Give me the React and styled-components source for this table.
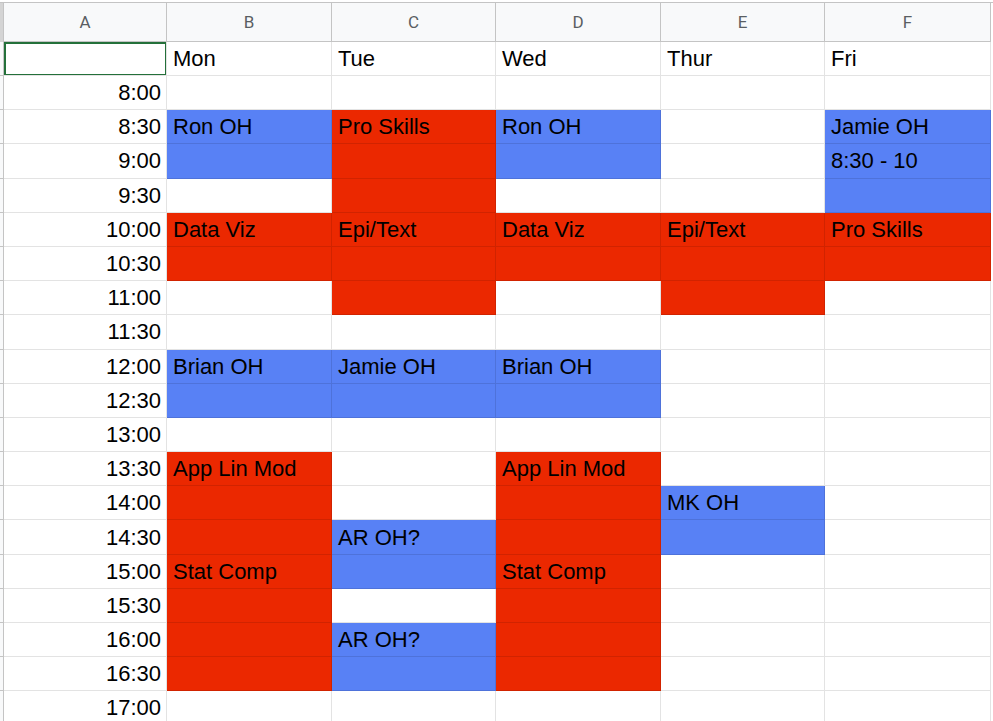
import React from 'react';
import styled, { createGlobalStyle } from 'styled-components';

const GlobalStyle = createGlobalStyle`
  body {
    margin: 0;
    background: #ffffff;
    font-family: "Liberation Sans", Arial, sans-serif;
  }
`;

const RED = '#eb2800';
const BLUE = '#5881f5';

const Sheet = styled.div`
  width: 993px;
  height: 721px;
  overflow: hidden;
  padding-top: 2px;
  box-sizing: border-box;
`;

const Grid = styled.div`
  display: grid;
  grid-template-columns: 4px 163px 165px 164px 165px 164px 166px;
  grid-template-rows: 39px 34px repeat(19, 34.2px);
  border-top: 1px solid #c4c4c4;
`;

const Corner = styled.div`
  background: #d4d4d4;
  border-right: 1px solid #c4c4c4;
  box-sizing: border-box;
`;

const RowStub = styled.div`
  background: #f8f9fa;
  border-right: 1px solid #c4c4c4;
  border-bottom: 1px solid #c4c4c4;
  box-sizing: border-box;
`;

const ColHead = styled.div`
  background: #f8f9fa;
  border-right: 1px solid #c4c4c4;
  border-bottom: 1px solid #c4c4c4;
  box-sizing: border-box;
  display: flex;
  align-items: center;
  justify-content: center;
  font-family: Roboto, "Liberation Sans", sans-serif;
  font-size: 17px;
  color: #5a5e62;
`;

const Cell = styled.div`
  background: ${(p) => p.$fill || '#ffffff'};
  border-right: 1px solid rgba(0, 0, 0, 0.11);
  border-bottom: 1px solid rgba(0, 0, 0, 0.11);
  box-sizing: border-box;
  display: flex;
  align-items: center;
  justify-content: ${(p) => (p.$right ? 'flex-end' : 'flex-start')};
  padding: 1px 5px 0 6px;
  font-size: 22px;
  color: #000000;
  white-space: nowrap;
  overflow: hidden;
  position: relative;
`;

const Selection = styled.div`
  position: absolute;
  inset: 0 -1px -1px 0;
  border: 2px solid #24703a;
  pointer-events: none;
`;

const times = [
  '8:00', '8:30', '9:00', '9:30', '10:00', '10:30', '11:00', '11:30', '12:00',
  '12:30', '13:00', '13:30', '14:00', '14:30', '15:00', '15:30', '16:00', '16:30', '17:00',
];

const R = 'r';
const B = 'b';

// each day: row index -> [colour, label]
const days = [
  {
    name: 'Mon',
    cells: {
      1: [B, 'Ron OH'], 2: [B],
      4: [R, 'Data Viz'], 5: [R],
      8: [B, 'Brian OH'], 9: [B],
      11: [R, 'App Lin Mod'], 12: [R], 13: [R],
      14: [R, 'Stat Comp'], 15: [R], 16: [R], 17: [R],
    },
  },
  {
    name: 'Tue',
    cells: {
      1: [R, 'Pro Skills'], 2: [R], 3: [R],
      4: [R, 'Epi/Text'], 5: [R], 6: [R],
      8: [B, 'Jamie OH'], 9: [B],
      13: [B, 'AR OH?'], 14: [B],
      16: [B, 'AR OH?'], 17: [B],
    },
  },
  {
    name: 'Wed',
    cells: {
      1: [B, 'Ron OH'], 2: [B],
      4: [R, 'Data Viz'], 5: [R],
      8: [B, 'Brian OH'], 9: [B],
      11: [R, 'App Lin Mod'], 12: [R], 13: [R],
      14: [R, 'Stat Comp'], 15: [R], 16: [R], 17: [R],
    },
  },
  {
    name: 'Thur',
    cells: {
      4: [R, 'Epi/Text'], 5: [R], 6: [R],
      12: [B, 'MK OH'], 13: [B],
    },
  },
  {
    name: 'Fri',
    cells: {
      1: [B, 'Jamie OH'], 2: [B, '8:30 - 10'], 3: [B],
      4: [R, 'Pro Skills'], 5: [R],
    },
  },
];

const fillOf = (c) => (c === R ? RED : c === B ? BLUE : undefined);

const App = () => {
  return (
    <Sheet>
      <GlobalStyle />
      <Grid>
        <Corner />
        {['A', 'B', 'C', 'D', 'E', 'F'].map((l) => (
          <ColHead key={l}>{l}</ColHead>
        ))}

        <RowStub />
        <Cell>
          <Selection />
        </Cell>
        {days.map((d) => (
          <Cell key={d.name}>{d.name}</Cell>
        ))}

        {times.map((t, i) => (
          <React.Fragment key={t}>
            <RowStub />
            <Cell $right>{t}</Cell>
            {days.map((d) => {
              const entry = d.cells[i];
              return (
                <Cell key={d.name} $fill={entry ? fillOf(entry[0]) : undefined}>
                  {entry && entry[1]}
                </Cell>
              );
            })}
          </React.Fragment>
        ))}
      </Grid>
    </Sheet>
  );
};

export default App;
